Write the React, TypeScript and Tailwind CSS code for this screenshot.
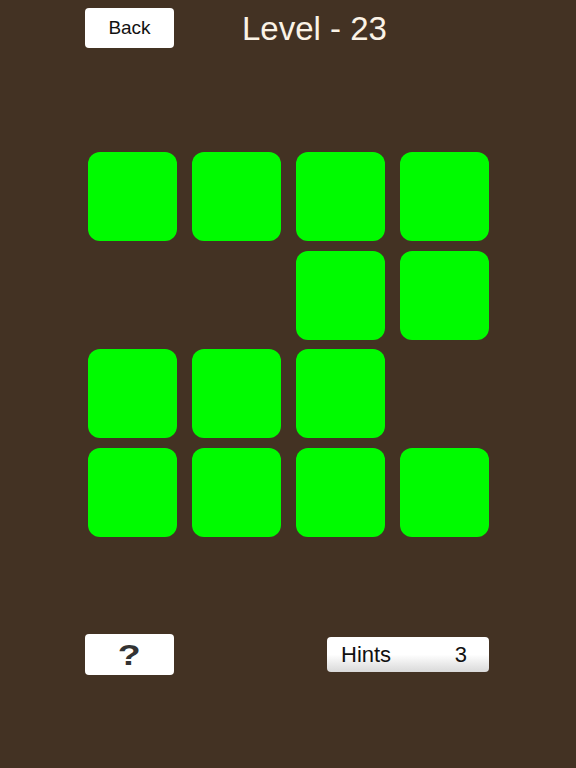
const rows = [
  [1, 1, 1, 1],
  [0, 0, 1, 1],
  [1, 1, 1, 0],
  [1, 1, 1, 1],
];

export default function App() {
  return (
    <div
      className="w-[576px] h-[768px] bg-[#433223] flex flex-col overflow-hidden"
      style={{ fontFamily: '"Liberation Sans", Arial, sans-serif' }}
    >
      {/* header */}
      <div className="flex items-center pt-[8px] pl-[85px]">
        <button className="w-[89px] h-[40px] bg-white rounded-[4px] text-[19px] text-[#111] flex items-center justify-center">
          Back
        </button>
        <h1 className="ml-[68px] text-[33px] leading-none text-[#fbf3e6]">Level - 23</h1>
      </div>

      {/* board */}
      <div className="mt-[104px] ml-[88px] grid grid-cols-[89px_89px_89px_89px] gap-x-[15px] gap-y-[9.7px]">
        {rows.flat().map((on, i) =>
          on ? (
            <div key={i} className="h-[89px] rounded-[12px] bg-[#00fb00]" />
          ) : (
            <div key={i} className="h-[89px]" />
          )
        )}
      </div>

      {/* footer */}
      <div className="mt-[97px] flex items-center pl-[85px]">
        <button className="w-[89px] h-[41px] bg-white rounded-[4px] flex items-center justify-center">
          <span className="text-[30px] font-black text-[#333] leading-none scale-x-125 inline-block">?</span>
        </button>
        <div className="ml-[153px] w-[162px] h-[35px] rounded-[4px] bg-gradient-to-b from-white via-white to-[#d9d9d9] flex items-center justify-between pl-[14px] pr-[22px] text-[22px] text-[#111]">
          <span>Hints</span>
          <span>3</span>
        </div>
      </div>
    </div>
  );
}
